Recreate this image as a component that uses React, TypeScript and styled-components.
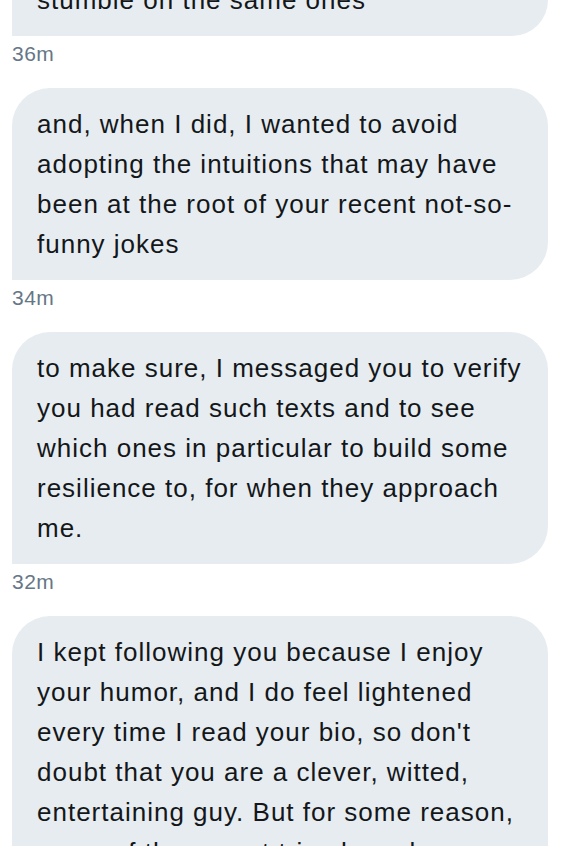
import React from 'react'
import styled, { createGlobalStyle } from 'styled-components'

const GlobalStyle = createGlobalStyle`
  html, body {
    margin: 0;
    padding: 0;
    background: #ffffff;
    overflow: hidden;
  }
  body {
    font-family: "Liberation Sans", Arial, sans-serif;
  }
`

// each message keeps its lines as the app wrapped them
const messages = [
  { lines: ['stumble on the same ones'], time: '36m' },
  {
    lines: [
      'and, when I did, I wanted to avoid',
      'adopting the intuitions that may have',
      'been at the root of your recent not-so-',
      'funny jokes',
    ],
    time: '34m',
  },
  {
    lines: [
      'to make sure, I messaged you to verify',
      'you had read such texts and to see',
      'which ones in particular to build some',
      'resilience to, for when they approach',
      'me.',
    ],
    time: '32m',
  },
  {
    lines: [
      'I kept following you because I enjoy',
      'your humor, and I do feel lightened',
      "every time I read your bio, so don't",
      'doubt that you are a clever, witted,',
      'entertaining guy. But for some reason,',
      'some of the recent tries have been',
    ],
    time: '30m',
  },
]

const App = () => {
  return (
    <>
      <GlobalStyle />
      <Thread>
        {messages.map((m, i) => (
          <Message key={i}>
            <Bubble>
              {m.lines.map((line, j) => (
                <Line key={j}>{line}</Line>
              ))}
            </Bubble>
            <Time>{m.time}</Time>
          </Message>
        ))}
      </Thread>
    </>
  )
}

export default App

const Thread = styled.div`
  display: flex;
  flex-direction: column;
  gap: 22px;
  padding: 0 24px 0 12px;
  margin-top: -36px;
  height: 882px;
  overflow: hidden;
`

const Message = styled.div`
  display: flex;
  flex-direction: column;
  align-items: flex-start;
`

const Bubble = styled.div`
  box-sizing: border-box;
  width: 536px;
  padding: 16px 20px 16px 25px;
  background: #e6ecf0;
  color: #14171a;
  font-size: 26px;
  line-height: 40px;
  letter-spacing: 1px;
  border-radius: 38px 38px 38px 0;
`

const Line = styled.div`
  white-space: nowrap;
`

const Time = styled.div`
  margin-top: 6px;
  font-size: 21px;
  line-height: 24px;
  letter-spacing: 0.5px;
  color: #657786;
`
